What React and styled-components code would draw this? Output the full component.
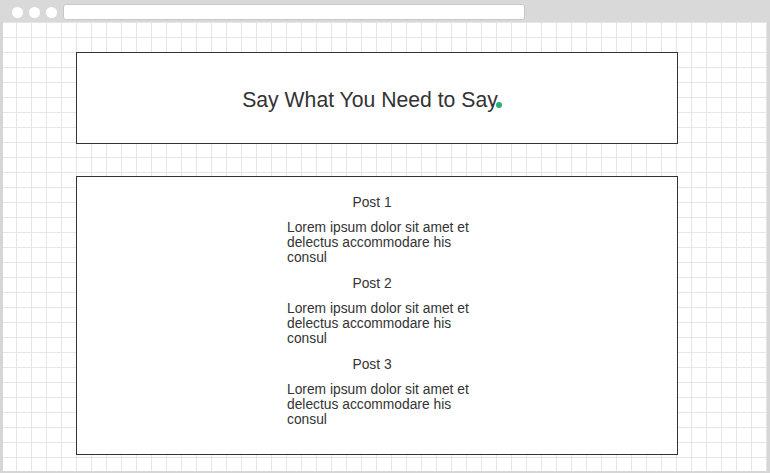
import React from 'react';
import styled, { createGlobalStyle } from 'styled-components';

const posts = [
  { title: 'Post 1', body: 'Lorem ipsum dolor sit amet et delectus accommodare his consul' },
  { title: 'Post 2', body: 'Lorem ipsum dolor sit amet et delectus accommodare his consul' },
  { title: 'Post 3', body: 'Lorem ipsum dolor sit amet et delectus accommodare his consul' },
];

export default function App() {
  return (
    <Window>
      <GlobalStyle />
      <TopBar>
        <Dots>
          <Dot />
          <Dot />
          <Dot />
        </Dots>
        <AddressBar />
      </TopBar>
      <Canvas>
        <HeaderBox>
          <Title>
            Say What You Need to Say
            <Cursor />
          </Title>
        </HeaderBox>
        <PostsBox>
          <PostList>
            {posts.map(post => (
              <Post key={post.title}>
                <PostTitle>{post.title}</PostTitle>
                <PostBody>{post.body}</PostBody>
              </Post>
            ))}
          </PostList>
        </PostsBox>
      </Canvas>
    </Window>
  );
}

const GlobalStyle = createGlobalStyle`
  * { box-sizing: border-box; }
  body {
    margin: 0;
    background: #fff;
    font-family: "Liberation Sans", Arial, sans-serif;
  }
`;
const Window = styled.div`
  width: 770px;
  height: 473px;
  display: flex;
  flex-direction: column;
  overflow: hidden;
`;
const TopBar = styled.div`
  height: 22px;
  flex-shrink: 0;
  display: flex;
  align-items: center;
  padding: 0 0 0 12px;
  background: #d9d9d9;
`;
const Dots = styled.div`
  display: flex;
  gap: 6px;
  margin-right: 6px;
  margin-top: 2px;
`;
const Dot = styled.span`
  width: 11px;
  height: 11px;
  border-radius: 50%;
  background: #fff;
`;
const AddressBar = styled.div`
  width: 462px;
  height: 16px;
  margin-top: 2px;
  background: #fff;
  border: 1px solid #c8c8c8;
  border-radius: 3px;
`;
const Canvas = styled.div`
  flex: 1;
  display: flex;
  flex-direction: column;
  gap: 32px;
  padding: 30px 0 0 73px;
  border-left: 3px solid #d6d6d6;
  border-right: 3px solid #d6d6d6;
  border-bottom: 2px solid #d6d6d6;
  background-color: #fff;
  background-image:
    linear-gradient(to right, #e6e6e6 1px, transparent 1px),
    linear-gradient(to bottom, #e6e6e6 1px, transparent 1px);
  background-size: 15px 15px;
  background-position: 13px 0;
`;
const HeaderBox = styled.div`
  width: 602px;
  height: 92px;
  display: flex;
  align-items: center;
  justify-content: center;
  padding: 3px 14px 0 0;
  background: #fff;
  border: 1px solid #333;
`;
const Title = styled.h1`
  position: relative;
  margin: 0;
  font-size: 21.2px;
  font-weight: normal;
  color: #333;
`;
const Cursor = styled.span`
  position: absolute;
  right: -4px;
  bottom: 4px;
  width: 6px;
  height: 6px;
  border-radius: 50%;
  background: #23b26d;
`;
const PostsBox = styled.div`
  width: 602px;
  height: 279px;
  padding: 18px 0 0 210px;
  background: #fff;
  border: 1px solid #333;
`;
const PostList = styled.div`
  width: 190px;
  display: flex;
  flex-direction: column;
  gap: 11px;
`;
const Post = styled.div`
  display: flex;
  flex-direction: column;
  gap: 10px;
  font-size: 13.8px;
  line-height: 15px;
  color: #333;
`;
const PostTitle = styled.div`
  text-align: center;
  padding-right: 20px;
`;
const PostBody = styled.p`
  margin: 0;
`;
